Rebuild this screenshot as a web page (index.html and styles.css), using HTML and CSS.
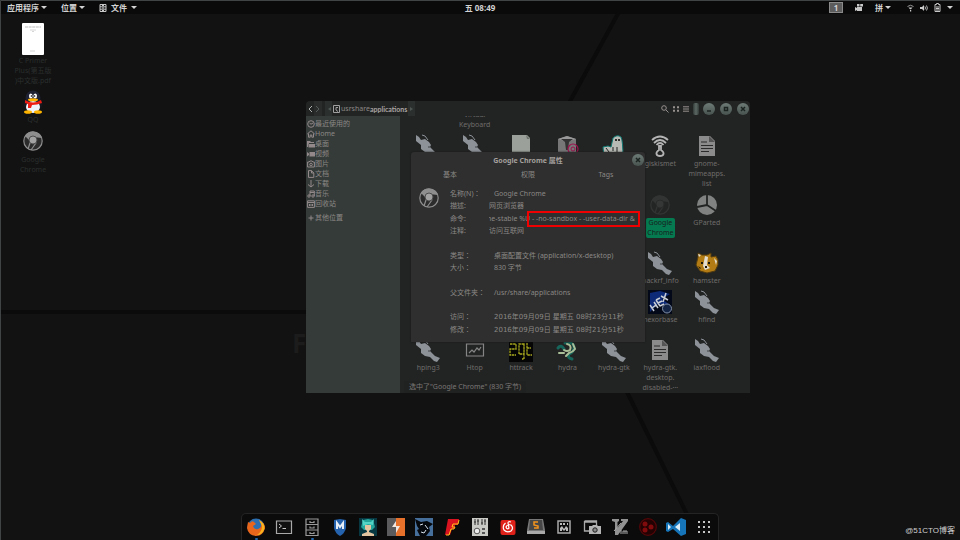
FILE: index.html
```html
<!DOCTYPE HTML>
<html>

<head>
  <meta charset="utf-8">
  <title>桌面</title>
  <link rel="stylesheet" href="styles.css">
</head>

<body>
  <!-- 公用图标 -->
  <svg class="defs">
    <symbol id="kali" viewBox="0 0 24 24">
      <path fill="#8d9298" d="M0 1L3 3L5 6L9 5L13 8L15 11L14 13L19 18L24 20L21 24L18 23L14 19L9 18L5 15L5 11L0 7Z" />
      <path fill="none" stroke="#8d9298" d="M6 1L9 2L12 6" />
      <circle cx="13" cy="13" r=".7" fill="#222" />
    </symbol>
    <symbol id="chrome" viewBox="0 0 20 20">
      <circle cx="10" cy="10" r="9.200" fill="#2c2c2c" stroke="#8e8e8e" stroke-width="1.200" />
      <path fill="#8e8e8e" d="M2 5A9.500 9.500 0 0 1 19 7L10 6A4 4 0 0 0 6 9Z" />
      <path fill="none" stroke="#8e8e8e" stroke-width="1.200" d="M7 12L5 18M13 12L8 19" />
      <circle cx="10" cy="9" r="4" fill="#a2a2a2" stroke="#4c4c4c" />
    </symbol>
    <symbol id="doc" viewBox="0 0 24 24">
      <path fill="#8b8b8b" d="M4 2H15L20 7V22H4Z" />
      <path fill="#555" d="M14 2V8H20Z" />
      <path stroke="#2b2b2b" stroke-width="1.200" d="M6 8H12M6 11.500H18M6 14.500H18M6 17.500H14" />
    </symbol>
    <symbol id="cross" viewBox="0 0 12 12">
      <path fill="none" stroke="#1c2422" stroke-width="1.500" d="M4 4L8 8M8 4L4 8" />
    </symbol>
  </svg>

  <!-- 壁纸 -->
  <svg class="wallpaper" viewBox="0 0 960 540" preserveAspectRatio="none">
    <path fill="none" stroke="#0b0b0b" stroke-width="4" d="M620 10L568 105M0 312H310M626 390L702 545" />
    <path fill="none" stroke="#414444" stroke-width="1" d="M.5 540V.5H960" />
  </svg>
  <div class="wall-text">F</div>

  <header class="topbar">
    <nav class="menus">
      <button class="menu">应用程序<i class="arrow"></i></button>
      <button class="menu">位置<i class="arrow"></i></button>
      <button class="menu files">
        <svg width="8" height="8" viewBox="0 0 8 8"><path fill="none" stroke="#c8c8c8" d="M1 .5H7V7.500H1ZM1 2.800H7M1 5.200H7M3 1.500H5M3 4H5M3 6.500H5" /></svg>
        文件<i class="arrow"></i>
      </button>
    </nav>
    <button class="clock">五 08:49</button>
    <div class="tray">
      <button class="workspace">1</button>
      <svg width="8" height="8" viewBox="0 0 8 8"><path fill="#c8c8c8" d="M2 3H7V7H2ZM0 3L2 4V6L0 7ZM2 0H4.500V2.500H2ZM5.200 0H8V2.500H5.200Z" /></svg>
      <button class="menu input-method">拼<i class="arrow"></i></button>
      <button class="menu system" aria-label="系统">
        <svg width="7" height="8" viewBox="0 0 7 8"><path fill="none" stroke="#999" d="M.5 2.500Q3.500 0 6.500 2.500" /><path fill="#c8c8c8" d="M1.500 3.500H5.500L4 5.200H3ZM3 6H4.200V7.500H3Z" /></svg>
        <svg width="8" height="8" viewBox="0 0 8 8"><path fill="#ccc" d="M0 3H2L4 1V7L2 5H0Z" /><path fill="none" stroke="#b5b5b5" d="M5 2.500Q6 4 5 5.500M6.500 1.500Q8.300 4 6.500 6.500" /></svg>
        <svg width="7" height="9" viewBox="0 0 7 9"><path fill="none" stroke="#c8c8c8" d="M1 1.500H2.500V.5H4.500V1.500H6V8.500H1ZM2 4H5M2 5.500H5M2 7H5" /></svg>
        <i class="arrow"></i>
      </button>
    </div>
  </header>

  <main class="desktop">
    <div class="shortcuts">
      <div class="shortcut pdf">
        <svg width="22" height="32" viewBox="0 0 22 32"><rect width="22" height="32" rx="1" fill="#fff" /><path stroke="#aaa" stroke-width=".8" stroke-dasharray="3 .6" d="M3 4H19" /><path stroke="#bbb" stroke-width=".6" d="M8 7H14M10 8.500H12M8 28H13" /></svg>
        <span>C Primer<br>Plus(第五版<br>)中文版.pdf</span>
      </div>
      <div class="shortcut">
        <svg width="20" height="24" viewBox="0 0 20 24">
          <ellipse cx="10" cy="14" rx="9.500" ry="7" fill="#161820" />
          <ellipse cx="10" cy="8" rx="7.500" ry="7.500" fill="#1f2233" />
          <ellipse cx="10" cy="17" rx="7" ry="6" fill="#eef2fa" />
          <ellipse cx="7.800" cy="6" rx="1.800" ry="2.500" fill="#fff" /><ellipse cx="12.200" cy="6" rx="1.800" ry="2.500" fill="#fff" />
          <circle cx="8.400" cy="6" r=".8" /><circle cx="11.600" cy="6" r=".8" />
          <ellipse cx="10" cy="9.700" rx="5" ry="1.500" fill="#ffb400" />
          <path fill="#ee1c12" d="M2 10Q10 15 18 10L19 13Q14 15 9 15L8 18H5L5 14L2 13Z" />
          <ellipse cx="5" cy="22" rx="4" ry="1.800" fill="#ffb400" /><ellipse cx="15" cy="22" rx="4" ry="1.800" fill="#ffb400" />
        </svg>
        <span>QQ</span>
      </div>
      <div class="shortcut chrome">
        <svg width="20" height="20"><use href="#chrome" /></svg>
        <span>Google<br>Chrome</span>
      </div>
    </div>

    <!-- 文件管理器 -->
    <section class="window">
      <div class="titlebar">
        <button class="nav-btn on" aria-label="后退"><svg width="6" height="8" viewBox="0 0 6 8"><path d="M5 1L2 4L5 7" /></svg></button>
        <button class="nav-btn" aria-label="前进"><svg width="6" height="8" viewBox="0 0 6 8"><path d="M1 1L4 4L1 7" /></svg></button>
        <div class="path">
          <button class="step" aria-label="向左"><svg width="4" height="6" viewBox="0 0 4 6"><path fill="#4e5553" d="M4 1V5L1 3Z" /></svg></button>
          <svg class="disk" width="7" height="8" viewBox="0 0 7 8"><path fill="none" stroke="#a0a0a0" d="M.5 .5H6.500V7.500H.5ZM5 2.500H3V5L5 6.500" /></svg>
          <a href="#">usr</a><a href="#">share</a><a href="#" class="here">applications</a>
          <button class="step" aria-label="向右"><svg width="4" height="6" viewBox="0 0 4 6"><path fill="#4e5553" d="M0 1V5L3 3Z" /></svg></button>
        </div>
        <div class="tools">
          <button aria-label="搜索"><svg width="8" height="8" viewBox="0 0 8 8"><circle cx="3" cy="3" r="2.300" /><path d="M5 5L7.500 7.500" /></svg></button>
          <button aria-label="图标视图"><svg width="6" height="6" viewBox="0 0 6 6"><path d="M0 1.200H2M4 1.200H6M0 4.800H2M4 4.800H6" stroke-width="2" /></svg></button>
          <button aria-label="列表"><svg width="6" height="6" viewBox="0 0 6 6"><path d="M0 .8H6M0 3H6M0 5.200H6" /></svg></button>
        </div>
        <i class="pill"></i>
        <button class="round" aria-label="最小化"><svg viewBox="0 0 12 12"><path stroke="#1c2422" stroke-width="1.300" d="M4 8H8" /></svg></button>
        <button class="round" aria-label="最大化"><svg viewBox="0 0 12 12"><path fill="none" stroke="#1c2422" stroke-width="1.500" d="M4.500 4.500H7.500V7.500H4.500Z" /></svg></button>
        <button class="round" aria-label="关闭"><svg viewBox="0 0 12 12"><use href="#cross" /></svg></button>
      </div>

      <div class="columns">
        <ul class="places">
          <li><svg viewBox="0 0 8 8"><circle cx="4" cy="4" r="3.300" /><path d="M2.500 3L4 4.200L6 3" /></svg>最近使用的</li>
          <li><svg viewBox="0 0 8 8"><path d="M.3 4L4 .8L7.700 4M1.500 3.500V7.200H3.200V5H4.800V7.200H6.500V3.500" /></svg>Home</li>
          <li><svg viewBox="0 0 8 8"><path class="fill" d="M0 1H3L4 2H7V3H2L1 7H0ZM2 4H8V7.500H1.500Z" /></svg>桌面</li>
          <li><svg viewBox="0 0 8 8"><path class="fill" d="M2.500 2H8V6.500H2.500ZM0 2L2 3.500V5L0 6.500Z" /></svg>视频</li>
          <li><svg viewBox="0 0 8 8"><path d="M.6 2H2L3 1H5L6 2H7.400V7H.6Z" /><circle cx="4" cy="4.500" r="1.300" /></svg>图片</li>
          <li><svg viewBox="0 0 8 8"><path d="M1.500 .6H4.500L6.800 3V7.400H1.500ZM4.500 .6V3H6.800" /></svg>文档</li>
          <li><svg viewBox="0 0 8 8"><path d="M4 0V7M1 4.500L4 7L7 4.500" /></svg>下载</li>
          <li><svg viewBox="0 0 8 8"><path d="M3 6V1H7.300V6M3 2.500H7.300" /><circle cx="2" cy="6" r="1.200" /><circle cx="6" cy="6" r="1.200" /></svg>音乐</li>
          <li><svg viewBox="0 0 8 8"><path d="M.6 .8H7.400V7.400H.6ZM.6 2.500H7.400M2.500 4V6M4 4V6M5.500 4V6" /></svg>回收站</li>
          <li class="other"><svg viewBox="0 0 8 8"><path d="M4 1.500V6.500M1.500 4H6.500" /></svg>其他位置</li>
        </ul>

        <div class="files-pane">
          <div class="grid">
            <!-- 第 0 行,滚出去一半 -->
            <div class="file r0">Virtual<br>Keyboard</div>

            <div class="file r1 c1"><svg><use href="#kali" /></svg></div>
            <div class="file r1"><svg><use href="#kali" /></svg></div>
            <div class="file r1"><svg viewBox="0 0 24 24"><path fill="#9ba19a" d="M3 1H18L21 4V24H3Z" /><path fill="#6d736c" d="M17 1L21 5H18Z" /></svg></div>
            <div class="file r1"><svg viewBox="0 0 24 24"><path fill="#777" d="M3 5L12 2L21 5V24H3Z" /><path fill="#999" d="M3 5L12 2L21 5L12 8Z" /><path fill="#333" d="M6 5H18L14 8L13 16H11L10 8Z" /><circle cx="18" cy="15" r="5" fill="none" stroke="#a0104e" stroke-width="1.200" /><circle cx="18" cy="15" r="2" fill="none" stroke="#a0104e" /></svg></div>
            <div class="file r1"><svg viewBox="0 0 24 24"><path fill="#b7bab5" stroke="#0e7671" stroke-width="1" d="M11 4Q15 0 19 3Q21 7 21 24H2L1 13L6 12L9 13Z" /><circle cx="14" cy="6" r="1" /><circle cx="17" cy="6" r="1" /><path stroke="#222" d="M4 14L7 18M11 13V17M15 13V18" /></svg></div>
            <div class="file r1"><svg viewBox="0 0 24 24"><g fill="none" stroke="#b4b4b4" stroke-width="1.800"><path d="M4 6Q12-1 20 6M6 9Q12 3 18 9M8.500 11Q12 7 15.500 11" /><path d="M11 12H13V16Q16 18 15.500 20Q15 22 12 22Q9 22 8.500 20Q8 18 11 16Z" /></g></svg>giskismet</div>
            <div class="file r1"><svg><use href="#doc" /></svg>gnome-<br>mimeapps.<br>list</div>

            <div class="file r2 c6 dim"><svg viewBox="0 0 20 20"><use href="#chrome" /></svg><mark>Google<br>Chrome</mark></div>
            <div class="file r2 c7"><svg viewBox="0 0 24 24"><circle cx="12" cy="12" r="10" fill="#808282" /><path fill="none" stroke="#222423" stroke-width="1.800" d="M12 1V12L21 18M12 12L2 14" /></svg>GParted</div>

            <div class="file r3 c6"><svg><use href="#kali" /></svg>hackrf_info</div>
            <div class="file r3 c7"><svg viewBox="0 0 24 24"><path fill="#b27b13" stroke="#503a10" d="M3 6V2L7 4H12L16 2V6L21 5L23 9L23 14L20 20L12 22L5 20L1 14Z" /><path fill="#e2ddd0" d="M10 5L13 6L12 14L15 17L10 19L8 15ZM3 3L6 4L4 6ZM19 7L22 10L21 14Z" /><path fill="#1c160a" d="M6 11H8V13H6ZM13 11H15V13H13ZM10 15H12V17H10ZM3 15L6 17L5 18Z" /></svg>hamster</div>

            <div class="file r4 c6"><svg viewBox="0 0 24 24"><path fill="#04091a" d="M0 0H24V24H0Z" /><path fill="#0d2a78" d="M2 3L12 1L22 4L14 9L22 15L10 14L2 22Z" /><path fill="none" stroke="#c8cdd5" stroke-width="1.500" d="M2 15L6 21M6 12L10 18M4 18L8 15M8 10L12 16M8 10L12 8M10 13L14 11M12 16L16 14M13 6L20 10M18 3L15 12" /><circle cx="19" cy="18.500" r="4.500" fill="#142444" stroke="#8592a8" /></svg>hexorbase</div>
            <div class="file r4 c7"><svg><use href="#kali" /></svg>hfind</div>

            <div class="file r5 c1"><svg><use href="#kali" /></svg>hping3</div>
            <div class="file r5"><svg viewBox="0 0 24 24"><path fill="none" stroke="#858585" stroke-width="1.200" d="M3.500 6H20.500V18H3.500ZM6 15L9 12L11 14L14 10L16 12L18 9" /></svg>Htop</div>
            <div class="file r5"><svg viewBox="0 0 24 24"><path fill="#050505" d="M0 0H24V24H0Z" /><path fill="none" stroke="#a9a91f" stroke-width="1.300" stroke-dasharray="2.500 .6" d="M1 6H7V11H1V17H7M15 6H10V16H15ZM15 6V21H13M18 5V17H23M18 10H22" /></svg>httrack</div>
            <div class="file r5"><svg viewBox="0 0 24 24"><g fill="none" stroke-linecap="round"><path stroke="#16665c" stroke-width="3" d="M10 5Q18 3 19 9Q19 14 14 16Q12 20 17 21M3 10Q6 6 9 11" /><path stroke="#a9bd97" stroke-width="2" d="M12 6Q17 7 15 12Q12 14 9 12M18 6L20 11Q18 14 14 15L11 18M4 15L9 15" /></g></svg>hydra</div>
            <div class="file r5"><svg><use href="#kali" /></svg>hydra-gtk</div>
            <div class="file r5"><svg><use href="#doc" /></svg>hydra-gtk.<br>desktop.<br>disabled-···</div>
            <div class="file r5"><svg><use href="#kali" /></svg>iaxflood</div>
          </div>
          <div class="status">选中了"Google Chrome" (830 字节)</div>
        </div>
      </div>
    </section>

    <!-- 属性对话框 -->
    <form class="dialog">
      <div class="dialog-title">Google Chrome 属性
        <button type="button" class="round" aria-label="关闭"><svg viewBox="0 0 12 12"><use href="#cross" /></svg></button>
      </div>
      <div class="tabs">
        <button type="button">基本</button>
        <button type="button">权限</button>
        <button type="button">Tags</button>
      </div>
      <div class="props">
        <svg class="props-icon" width="20" height="20"><use href="#chrome" /></svg>
        <div class="fields">
          <div class="row"><label for="name">名称(N)：</label><input id="name" class="indent" value="Google Chrome"></div>
          <div class="row"><label for="desc">描述:</label><input id="desc" value="网页浏览器"></div>
          <div class="row">
            <label for="cmd">命令:</label>
            <div class="cmd"><input id="cmd" value="ne-stable %U - -no-sandbox - -user-data-dir &amp;"><i class="highlight"></i></div>
          </div>
          <div class="row"><label for="note">注释:</label><input id="note" value="访问互联网"></div>
          <div class="row l6"><span>类型：</span><span class="indent">桌面配置文件 (application/x-desktop)</span></div>
          <div class="row l7"><span>大小：</span><span class="indent">830 字节</span></div>
          <div class="row l9"><span>父文件夹：</span><span class="indent">/usr/share/applications</span></div>
          <div class="row l11"><span>访问：</span><time class="indent">2016年09月09日 星期五 08时23分11秒</time></div>
          <div class="row l12"><span>修改：</span><time class="indent">2016年09月09日 星期五 08时21分51秒</time></div>
        </div>
      </div>
    </form>
  </main>

  <footer class="dock">
    <button class="app open" aria-label="Firefox"><svg viewBox="0 0 20 20"><circle cx="10" cy="10" r="8.500" fill="#2b6fb0" /><path fill="#e8661b" d="M2 5L4 6Q6 3 8 5L10 7L7 9Q8 13 12 12Q16 11 15 6L13 3Q19 6 19 11Q17 19 10 19Q2 18 1 11Z" /><path fill="#f8b31d" d="M13 3Q19 6 18.500 12Q16 18 11 18Q16 15 16 9Z" /></svg></button>
    <button class="app" aria-label="终端"><svg viewBox="0 0 20 20"><path fill="#111" stroke="#a9a9a9" stroke-width="1.200" d="M2.500 4H17.500V16.500H2.500Z" /><path fill="none" stroke="#c9c9c9" d="M5 7L7.500 9L5 11M8.500 11.500H12" /></svg></button>
    <button class="app open" aria-label="文件"><svg viewBox="0 0 20 20"><path fill="none" stroke="#9a9a9a" stroke-width="1.200" d="M4 2H16V18.500H4ZM4 7.500H16M4 13H16M8 4V5.500H12V4M8 9.500V11H12V9.500M8 15V16.500H12V15" /></svg></button>
    <button class="app" aria-label="Metasploit"><svg viewBox="0 0 20 20"><path fill="#2563ae" d="M4 3L10 2L16 3V11Q15 16 10 19Q5 16 4 11Z" /><path fill="none" stroke="#e6eef8" stroke-width="2" d="M7 12V6L10 10L13 6V12" /></svg></button>
    <button class="app" aria-label="Armitage"><svg viewBox="0 0 20 20"><path fill="#073842" d="M1 1H19V19H1Z" /><path fill="#23a59c" d="M5 3L10 2L15 3L17 10L14 13H6L3 10Z" /><path fill="#e2c4a0" d="M7 8H13V12L11 14V15L16 17V19H4V17L9 15V14L7 12Z" /><path fill="#52d4c7" d="M4 2L7 5H13L16 2L15 8L10 7L5 9Z" /></svg></button>
    <button class="app" aria-label="Burp"><svg viewBox="0 0 20 20"><path fill="#5b5b5d" d="M1 1H10V19H1Z" /><path fill="#e7702b" d="M10 1H19V19H10Z" /><path fill="#f1e6df" d="M10 4L6 10H10V16L14 9H10Z" /></svg></button>
    <button class="app" aria-label="Maltego"><svg viewBox="0 0 20 20"><path fill="#476f9c" d="M1 1H19V19H1Z" /><path fill="#05080d" d="M1 2L7 5L13 4L19 7L15 10L16 14L12 19H6L3 13L5 12L3 9Z" /><path fill="none" stroke="#d8e1ea" d="M6 8L9 7M11 8L14 12M7 15L10 16L12 13" /></svg></button>
    <button class="app" aria-label="FaradayIDE"><svg viewBox="0 0 20 20"><path fill="#d9131f" d="M6 2H17L16 8H13L12 12H10L8 18H3Z" /><path fill="none" stroke="#ffc21a" d="M17 3L16 7H11L10 10H13L12 12H9L7 18H4" /></svg></button>
    <button class="app" aria-label="混音器"><svg viewBox="0 0 20 20"><path fill="#c9c9c5" d="M2 1H18V19H2Z" /><path fill="none" stroke="#333" d="M5 2V8M8 2V8M12 2V8M15 2V8M4 5H6M7 4H9M11 6H13M14 4H16" /><circle cx="7" cy="14" r="2.800" fill="#eee" stroke="#555" /><path fill="#555" d="M12 11H15V13H12ZM12 15H15V17H12Z" /></svg></button>
    <button class="app" aria-label="网易云音乐"><svg viewBox="0 0 20 20"><rect x="2.500" y="3" width="15" height="15" rx="2" fill="#df2119" /><path fill="none" stroke="#fff" stroke-width="1.200" d="M7.500 6Q4 9 6 13Q9 16 13 14Q16 11 13 8Q9 7 8 10Q9 13 11 11L10 6Q10 4 13 5" /></svg></button>
    <button class="app" aria-label="Sublime"><svg viewBox="0 0 20 20"><path fill="#777" d="M3 2H17L19 13V17H1V13Z" /><path fill="#474747" d="M4 3H16L17 13H3Z" /><path fill="#a9a9a9" d="M1 14H19V17H1Z" /><path fill="none" stroke="#f6951c" stroke-width="1.500" d="M12 5H8V8L12 9V11H8" /></svg></button>
    <button class="app" aria-label="键盘"><svg viewBox="0 0 20 20"><path fill="none" stroke="#aaa" stroke-width="1.500" d="M4 4H16V16H4Z" /><path fill="#bbb" d="M6 6H8V8H6ZM9 6H11V8H9ZM13 6H14V8H13ZM6 11L8 9L10 12L12 9L14 11V14H12V12L10 14L8 12V14H6Z" /></svg></button>
    <button class="app" aria-label="截图"><svg viewBox="0 0 20 20"><path fill="none" stroke="#aaa" stroke-width="1.300" d="M2.500 4H14.500V8M2.500 4V14H7M2 5H15" /><path fill="#b5b5b5" d="M7 9H10L11 8H15L16 9H19V17H7Z" /><circle cx="13" cy="13" r="2.200" fill="#888" stroke="#222" /></svg></button>
    <button class="app" aria-label="Vim"><svg viewBox="0 0 20 20"><path fill="#929292" d="M2 2H9V4L7.500 5V11L13 4H11V2H18L18 4L8 18H5V5L2 4Z" /><path fill="none" stroke="#aaa" d="M11 13V17M13 17V14H17V17M15 14V17M4 14L11 6" /></svg></button>
    <button class="app" aria-label="录像"><svg viewBox="0 0 20 20"><circle cx="10" cy="10" r="8.300" fill="#230203" stroke="#560608" stroke-width="1.200" /><g fill="#800b0d"><circle cx="7" cy="7" r="2.500" /><circle cx="7" cy="13" r="2.500" /><circle cx="13" cy="10" r="2.500" /></g></svg></button>
    <button class="app" aria-label="VS Code"><svg viewBox="0 0 20 20"><path fill="#1674b8" d="M0 6L2 5L7 9L15 1L20 3V17L15 19L7 12L2 15L0 14Z" /><path fill="#d9ecf7" d="M14 6V14L9 10ZM2 7L5 10L2 13Z" /></svg></button>
    <button class="app" aria-label="显示应用程序"><svg viewBox="0 0 20 20"><path stroke="#c4c4c4" stroke-width="2" stroke-dasharray="2 3" d="M4 5H16M4 10H16M4 15H16" /></svg></button>
  </footer>

  <div class="watermark">@51CTO博客</div>
</body>

</html>
```
FILE: styles.css
```css
* {
  box-sizing: border-box;
  margin: 0;
  padding: 0;
}

body {
  position: relative;
  min-height: 100vh;
  display: flex;
  flex-direction: column;
  overflow: hidden;
  background: #121212;
  color: #8c8886;
  font: 7px/10px "Noto Sans", "Noto Sans CJK SC", sans-serif;
}

button,
input {
  border: 0;
  background: none;
  color: inherit;
  font: inherit;
}

li {
  list-style: none;
}

a {
  color: inherit;
  text-decoration: none;
}

svg {
  display: block;
  flex: none;
}

.defs {
  position: absolute;
  width: 0;
  height: 0;
}

/* 壁纸 */
.wallpaper {
  position: absolute;
  width: 100%;
  height: 100%;
}

.wall-text {
  position: absolute;
  left: 292px;
  top: 328px;
  color: #1c1c1c;
  font-size: 26px;
  font-weight: bold;
  line-height: 30px;
}

/* 顶栏 */
.topbar {
  position: relative;
  display: grid;
  grid-template-columns: 1fr auto 1fr;
  align-items: center;
  height: 14px;
  margin: 0 0 0 1px;
  padding: 0 7px 0 6px;
  border-top: 1px solid #414444;
  background: #0a0a0a;
  color: #d2d2d2;
  font-size: 8px;
  line-height: 12px;
  font-weight: bold;
}

.menus,
.tray,
.menu {
  display: flex;
  align-items: center;
}

.menus {
  gap: 14px;
}

.menu {
  gap: 2px;
}

.files {
  gap: 4px;
}

.arrow {
  border: 3px solid transparent;
  border-top-color: #d2d2d2;
  border-bottom: 0;
}

.tray {
  justify-content: flex-end;
}

.workspace {
  width: 14px;
  height: 11px;
  margin-right: 12px;
  border: 1px solid #8a8a8a;
  background: #5c5c5c;
  line-height: 9px;
}

.input-method {
  margin: 0 16px 0 12px;
}

.system {
  gap: 6px;
}

/* 桌面图标 */
.desktop {
  position: relative;
  flex: 1;
}

.shortcuts {
  display: flex;
  flex-direction: column;
  gap: 4px;
  width: 46px;
  margin: 9px 0 0 10px;
  color: #2b2f2e;
}

.shortcut {
  display: flex;
  flex-direction: column;
  align-items: center;
  gap: 1px;
  text-align: center;
  white-space: nowrap;
}

.shortcut.chrome {
  gap: 4px;
  padding-top: 2px;
}

/* 文件管理器窗口 */
.window {
  position: absolute;
  left: 306px;
  top: 87px;
  display: flex;
  flex-direction: column;
  width: 444px;
  height: 292px;
  border-radius: 4px 4px 0 0;
  overflow: hidden;
  background: #222423;
}

.titlebar {
  display: flex;
  align-items: center;
  height: 15px;
  padding-right: 1px;
}

.nav-btn {
  display: flex;
  align-items: center;
  justify-content: center;
  width: 8px;
  height: 15px;
  fill: none;
  stroke: #565c5a;
  background: #292c2b;
}

.nav-btn.on {
  stroke: #b0b0b0;
  background: none;
}

.path {
  display: flex;
  align-items: center;
  flex: 1;
  margin-left: 3px;
}

.step {
  display: flex;
  align-items: center;
  justify-content: center;
  width: 7px;
  height: 15px;
  background: #2b302e;
}

.disk {
  margin: 0 1px;
}

.here {
  margin-right: 1px;
  color: #aaa5a3;
  font-family: Lato, sans-serif;
  font-weight: bold;
}

.tools {
  display: flex;
  align-items: center;
  gap: 4px;
  fill: none;
  stroke: #97918f;
}

.pill {
  width: 6px;
  height: 12px;
  margin: 0 4px;
  border-radius: 2px;
  background: linear-gradient(90deg, #333b38, #5c6864, #333b38);
}

.round {
  width: 12px;
  height: 12px;
  border-radius: 50%;
  background: linear-gradient(#6d7b76, #47524e);
}

.titlebar .round + .round {
  margin-left: 5px;
}

.columns {
  display: flex;
  flex: 1;
  min-height: 0;
}

.places {
  width: 94px;
  padding-top: 3px;
  background: #353b39;
}

.places li {
  display: flex;
  align-items: center;
  padding-left: 1px;
}

.places .other {
  margin-top: 4px;
}

.places svg {
  width: 8px;
  height: 8px;
  fill: none;
  stroke: #93898a;
}

.places .fill {
  fill: #93898a;
  stroke: none;
}

.files-pane {
  position: relative;
  flex: 1;
  overflow: hidden;
  color: #6f6c6b;
}

.grid {
  display: grid;
  grid-template-columns: repeat(7, 1fr);
  grid-template-rows: 18px 59px 58px 39px 48px 56px;
  padding: 0 20px 0 5px;
}

.file {
  text-align: center;
  white-space: nowrap;
}

.file svg {
  width: 24px;
  height: 24px;
  margin: 0 auto 1px;
}

.r0 {
  grid-row: 1;
  grid-column: 2;
  align-self: end;
  padding-bottom: 4px;
}

.r1 {
  grid-row: 2;
}

.r2 {
  grid-row: 3;
}

.r3 {
  grid-row: 4;
}

.r4 {
  grid-row: 5;
}

.r5 {
  grid-row: 6;
}

.c1 {
  grid-column: 1;
}

.c6 {
  grid-column: 6;
}

.c7 {
  grid-column: 7;
}

.dim svg {
  padding: 2px;
  opacity: .15;
}

.file mark {
  display: block;
  width: 29px;
  margin: 0 auto;
  border-radius: 2px;
  background: #057a50;
  color: #17201d;
}

.status {
  position: absolute;
  left: 4px;
  bottom: 0;
  padding: 1px 5px;
  border-radius: 2px 2px 0 0;
  background: #202221;
  color: #7b7776;
}

/* 属性对话框 */
.dialog {
  position: absolute;
  left: 411px;
  top: 138px;
  display: flex;
  flex-direction: column;
  width: 234px;
  height: 190px;
  padding-bottom: 6px;
  border-radius: 3px 3px 0 0;
  background: #2e2f2e;
  box-shadow: 0 0 2px #151515;
}

.dialog-title {
  position: relative;
  height: 17px;
  color: #a5a09e;
  font-weight: bold;
  line-height: 17px;
  text-align: center;
}

.dialog-title .round {
  position: absolute;
  right: 1px;
  top: 2px;
}

.tabs {
  display: grid;
  grid-template-columns: repeat(3, 1fr);
  line-height: 12px;
}

.props {
  display: flex;
  flex: 1;
  gap: 11px;
  padding: 7px 5px 0 8px;
}

.fields {
  flex: 1;
  display: grid;
  grid-template-rows: repeat(12, 1fr);
  align-items: center;
  font-family: "Noto Sans", "Noto Sans CJK TC", sans-serif;
  white-space: nowrap;
}

.row {
  display: grid;
  grid-template-columns: 39px 1fr;
  align-items: center;
}

.fields input {
  display: block;
  width: 100%;
}

.fields .indent {
  padding-left: 5px;
}

.fields time {
  font-family: "DejaVu Sans", "Noto Sans CJK SC", sans-serif;
}

.l6 {
  grid-row: 6;
}

.l7 {
  grid-row: 7;
}

.l9 {
  grid-row: 9;
}

.l11 {
  grid-row: 11;
}

.l12 {
  grid-row: 12;
}

.cmd {
  position: relative;
}

#cmd {
  text-indent: -2px;
}

.highlight {
  position: absolute;
  left: 38px;
  right: 0;
  top: -3px;
  bottom: -3px;
  border: 2px solid #f00000;
}

/* 底部 dock */
.dock {
  position: relative;
  display: flex;
  align-self: center;
  height: 27px;
  border: 1px solid #242424;
  border-bottom: 0;
  border-radius: 5px 5px 0 0;
  background: #0b0b0b;
}

.app {
  position: relative;
  display: flex;
  justify-content: center;
  width: 28px;
  padding-top: 3px;
}

.app svg {
  width: 20px;
  height: 20px;
}

.open::after {
  content: "";
  position: absolute;
  bottom: 0;
  width: 3px;
  height: 2px;
  border-radius: 1px;
  background: #2168b0;
}

.watermark {
  position: absolute;
  right: 5px;
  bottom: 4px;
  color: #cfcfcf;
  font: 8px/10px "Liberation Sans", "Noto Sans CJK SC", sans-serif;
}
```
